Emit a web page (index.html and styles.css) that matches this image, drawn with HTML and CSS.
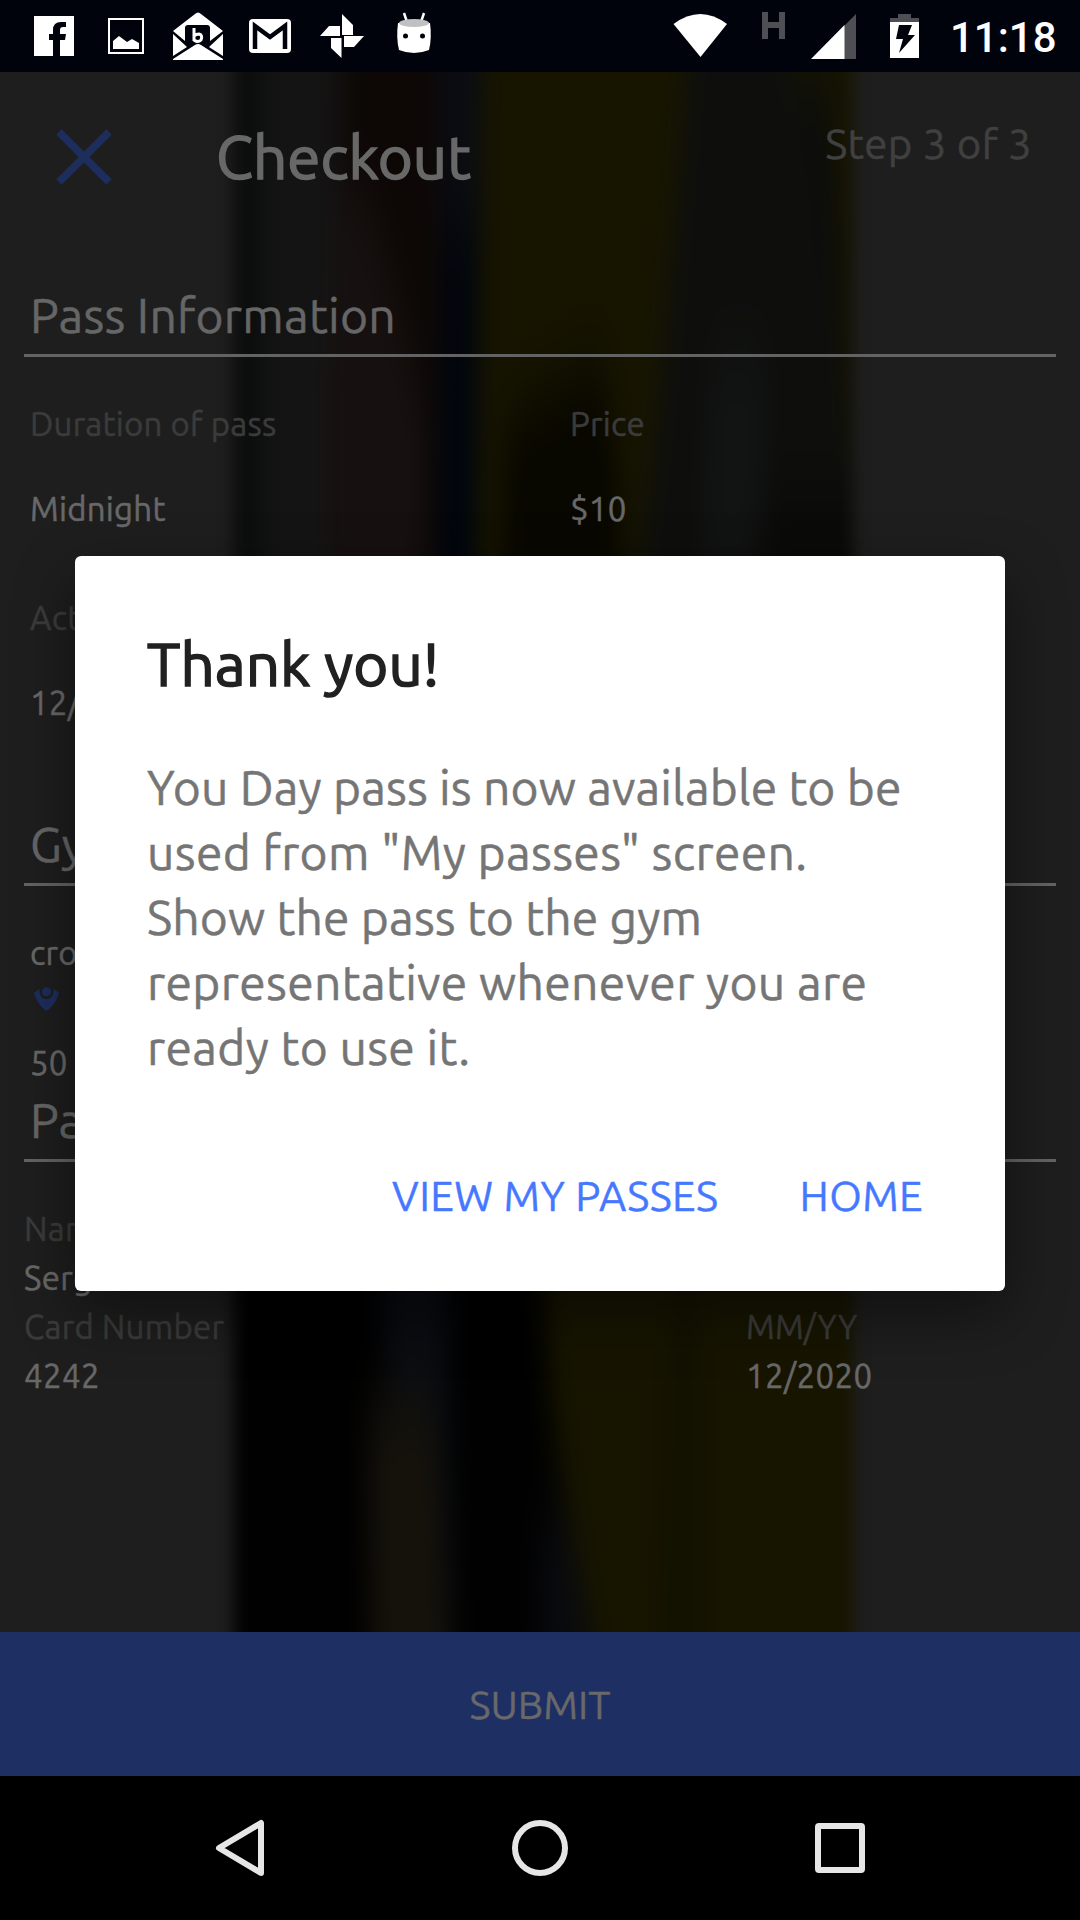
FILE: index.html
```
<!DOCTYPE html>
<html lang="en">
<head>
<meta charset="utf-8">
<title>Checkout</title>
<link rel="stylesheet" href="styles.css">
</head>
<body>
<div class="screen">
  <header class="status">
    <svg viewBox="0 0 540 72" width="540" height="72">
      <path fill="#fff" d="M34 16h40v40H60V40h5l1-6h-6v-4q0-3 3-3h3v-5h-5q-8 0-8 8v4h-4v6h4v16H34z"/>
      <path fill="none" stroke="#fff" stroke-width="2" d="M109 19h34v34h-34z"/>
      <path fill="#fff" d="M113 49v-8l6-5 8 6 5-3 7 4v6z"/>
      <path fill="#fff" d="M173 31 195 14q3-3 6 0L223 31 210 41V28q0-3-3-3h-19q-3 0-3 3v13zM173 34l14 13-14 9zM223 34l-14 13 14 9zM173 59l22-14q3-2 6 0l22 14v1h-50z"/>
      <path fill="none" stroke="#fff" stroke-width="3" d="M194 28v12q4 3 7 0 2-5-2-6-3 0-5 2"/>
      <rect x="249" y="19" width="42" height="34" rx="4" fill="#fff"/>
      <path fill="none" stroke="#00030c" stroke-width="4.500" d="M255 49V26l15 11 15-11v23"/>
      <path fill="#fff" d="M342 14l11 11v10h-11zM364 36 354 47h-10V36zM341.500 58 331 48V38h10.500zM320 36l9-10h11v10z"/>
      <path stroke="#fff" stroke-width="2.500" d="M404 13l3 9M424 13l-3 9"/>
      <path fill="#fff" d="M398 23h32q2 15-1 27-15 6-30 0-3-12-1-27z"/>
      <ellipse cx="414" cy="23" rx="15" ry="4" fill="#c0c0c2"/>
      <circle cx="405.500" cy="36" r="2.500" fill="#00030c"/><circle cx="422.500" cy="36" r="2.500" fill="#00030c"/>
    </svg>
    <svg viewBox="540 0 400 72" width="400" height="72">
      <path fill="#fff" d="M673.500 24q27-20 53.500 0L700.500 57z"/>
      <path fill="#4d4f54" d="M762 12h6v10h11V12h6v27h-6V28h-11v11h-6zM856 14v45h-12V26z"/>
      <path fill="#fff" d="M811 59 844.500 25v34z"/>
      <path fill="#4d4f54" d="M898 14h13v4h8v4h-29v-4h8z"/>
      <path fill="#fff" d="M890 22h29v36h-29z"/>
      <path fill="#00030c" d="M899 25h13l-4 10h7l-16 18 4-14h-7z"/>
    </svg>
    <time class="clock">11:18</time>
  </header>

  <main class="page">
    <svg class="backdrop" viewBox="0 72 1080 1560" width="1080" height="1560">
      <defs>
        <filter id="soft" x="-20%" y="-5%" width="140%" height="110%" color-interpolation-filters="sRGB"><feGaussianBlur stdDeviation="10 40"/></filter>
        <clipPath id="photo"><path d="M234 -60h619v1860H234z"/></clipPath>
        <filter id="edge" x="-10%" y="-10%" width="120%" height="120%" color-interpolation-filters="sRGB"><feGaussianBlur stdDeviation="8 0"/></filter>
      </defs>
      <g filter="url(#edge)"><g clip-path="url(#photo)"><g filter="url(#soft)">
        <path fill="#0b0c0c" d="M200-80h700v1900H200z"/>
        <path fill="#141414" d="M262-80h90v700l-20 200h-70z"/>
        <path fill="#0d0805" d="M342-80h103v900H335z"/>
        <path fill="#171010" d="M335 190h30l60 220v300H330V400z"/>
        <path fill="#0a0c13" d="M440-80h38v300h-38z"/>
        <path fill="#00050e" d="M445 220h32v500h-42z"/>
        <path fill="#171500" d="M484-80h386v500l-20 60-20-400H700l-40 400-10 150H475z"/>
        <path fill="#080700" d="M505 420l95-60 20 110v300H500z"/>
        <path fill="#0e0f0d" d="M700-80h70l62 400 30 350-120 120H610l50-400z"/>
        <path fill="#121414" d="M715 360h50l-10 200h-50z"/>
        <path fill="#090907" d="M775 500h120v200H740z"/>
        <path fill="#010101" d="M200 1000h330l70 800H200z"/>
        <path fill="#090c11" d="M375 1180h70l10 500h-45z"/>
        <path fill="#15120b" d="M368 1400h66l22 380h-84z"/>
        <path fill="#090a0e" d="M538 1520h35l30 220h-60z"/>
        <path fill="#171500" d="M520 1000h400v800H620l-65-360z"/>
        <path fill="#121000" d="M670 1300h30v450h-40z"/>
      </g></g></g>
    </svg>

    <div class="bar">
      <svg class="close" viewBox="0 0 56 56" width="56" height="56"><path d="M3 3l50 50M53 3L3 53"/></svg>
      <h1 class="bar-title">Checkout</h1>
      <div class="step">Step 3 of 3</div>
    </div>

    <h2 class="section">Pass Information</h2>
    <dl class="facts">
      <dt>Duration of pass</dt><dt>Price</dt>
      <dd>Midnight</dd><dd>$10</dd>
      <dt class="next">Act</dt><dt class="next"></dt>
      <dd>12/</dd><dd></dd>
    </dl>

    <h2 class="section gym">Gy</h2>
    <div class="gym-info">
      <div>cro</div>
      <svg class="pin" viewBox="0 0 25 24" width="25" height="24"><circle cx="12.500" cy="4.800" r="4.500"/><path d="M0 5.500 5.500 2Q5 12 12.500 12T19.500 2L25 5.500Q23.500 14 15 22.500q-2.500 2-5 0Q1.500 14 0 5.500z"/></svg>
      <div>50</div>
    </div>

    <h2 class="section pay">Pa</h2>
    <div class="card-info">
      <div class="label">Nam</div><div></div>
      <div class="value">Serg</div><div></div>
      <div class="label">Card Number</div><div class="label">MM/YY</div>
      <div class="value">4242</div><div class="value">12/2020</div>
    </div>
  </main>

  <button class="submit">SUBMIT</button>

  <nav class="nav">
    <svg viewBox="0 0 1080 144" width="1080" height="144">
      <path d="M261 47v50L219 72z"/><circle cx="540" cy="72" r="25"/><rect x="818" y="50" width="44" height="44" rx="1"/>
    </svg>
  </nav>

  <section class="dialog">
    <h3 class="dialog-title">Thank you!</h3>
    <p class="message">You Day pass is now available to be<br><span class="loose">used from "My passes" screen.</span><br>Show the pass to the gym<br><span class="loose">representative whenever you are<br>ready to use it.</span></p>
    <div class="actions"><span>VIEW MY PASSES</span><span>HOME</span></div>
  </section>
</div>
</body>
</html>
```
FILE: styles.css
```
* { box-sizing: border-box; }
body { margin: 0; background: #000; font-family: Ubuntu, "Noto Sans", sans-serif; }
h1, h2, h3, p, dl, dd, dt { margin: 0; font-weight: 400; }

.screen { position: relative; width: 1080px; height: 1920px; display: flex; flex-direction: column; overflow: hidden; }

.status { height: 72px; background: #00030c; display: flex; align-items: center; }
.clock { padding: 3px 0 0 10px; color: #fff; font: 500 42px/74px Roboto, sans-serif; }

.page { position: relative; flex: 1; background: #1e1e1e; padding: 0 24px; isolation: isolate; letter-spacing: .25px; -webkit-text-stroke: .5px; }
.backdrop { position: absolute; inset: 0; z-index: -1; }

.bar { height: 169px; display: flex; align-items: center; padding: 0 24px 0 32px; }
.close { fill: none; stroke: #1d2d5c; stroke-width: 7.5; }
.bar-title { flex: 1; padding-left: 104px; font-size: 60px; letter-spacing: .1px; -webkit-text-stroke: 1.6px; color: #686868; }
.step { padding-bottom: 26px; font-size: 42px; letter-spacing: .35px; color: #404040; }

.section { margin-top: 42px; height: 74px; padding: 0 6px 7px; border-bottom: 3px solid #636363; font-size: 48px; line-height: 64px; color: #666; }

.facts { margin-top: 45px; padding-left: 6px; display: grid; grid-template-columns: 540px 1fr; font-size: 33px; line-height: 44px; }
.facts dt { height: 85px; color: #3b3b3b; }
.facts dd { height: 44px; color: #686868; }
.facts .next { margin-top: 65px; }

.gym { margin-top: 87px; }
.gym-info { margin-top: 45px; padding-left: 6px; font-size: 33px; line-height: 44px; color: #686868; }
.pin { display: block; margin: 12px 0 30px 4px; fill: #1d2d5c; }

.pay { margin-top: 3px; }
.card-info { margin-top: 42px; display: grid; grid-template-columns: 722px 1fr; font-size: 33px; line-height: 49px; }
.label { color: #3b3b3b; }
.value { color: #686868; letter-spacing: .4px; }

.submit { height: 144px; padding: 2px 0 0; border: 0; background: #1e2f64; color: #69686a; font: 40px/142px Ubuntu, "Noto Sans", sans-serif; -webkit-text-stroke: .4px; }

.nav { height: 144px; background: #000; }
.nav svg { display: block; fill: none; stroke: #e6e6e6; stroke-width: 6; stroke-linejoin: round; }

.dialog { position: absolute; left: 75px; top: 556px; width: 930px; height: 735px; padding: 70px 72px 0; border-radius: 6px; background: #fff; box-shadow: 0 22px 60px rgba(0, 0, 0, .45); }
.dialog-title { font-size: 60px; line-height: 76px; letter-spacing: .1px; -webkit-text-stroke: 1.6px; color: #212121; }
.message { margin-top: 53px; font-size: 48px; line-height: 65px; letter-spacing: .14px; -webkit-text-stroke: .5px; color: #757575; white-space: nowrap; }
.loose { letter-spacing: .34px; }
.actions { display: flex; justify-content: flex-end; gap: 81px; margin-top: 86px; padding-right: 10px; font-size: 42px; line-height: 60px; letter-spacing: .4px; -webkit-text-stroke: .4px; color: #4678ff; }
```
